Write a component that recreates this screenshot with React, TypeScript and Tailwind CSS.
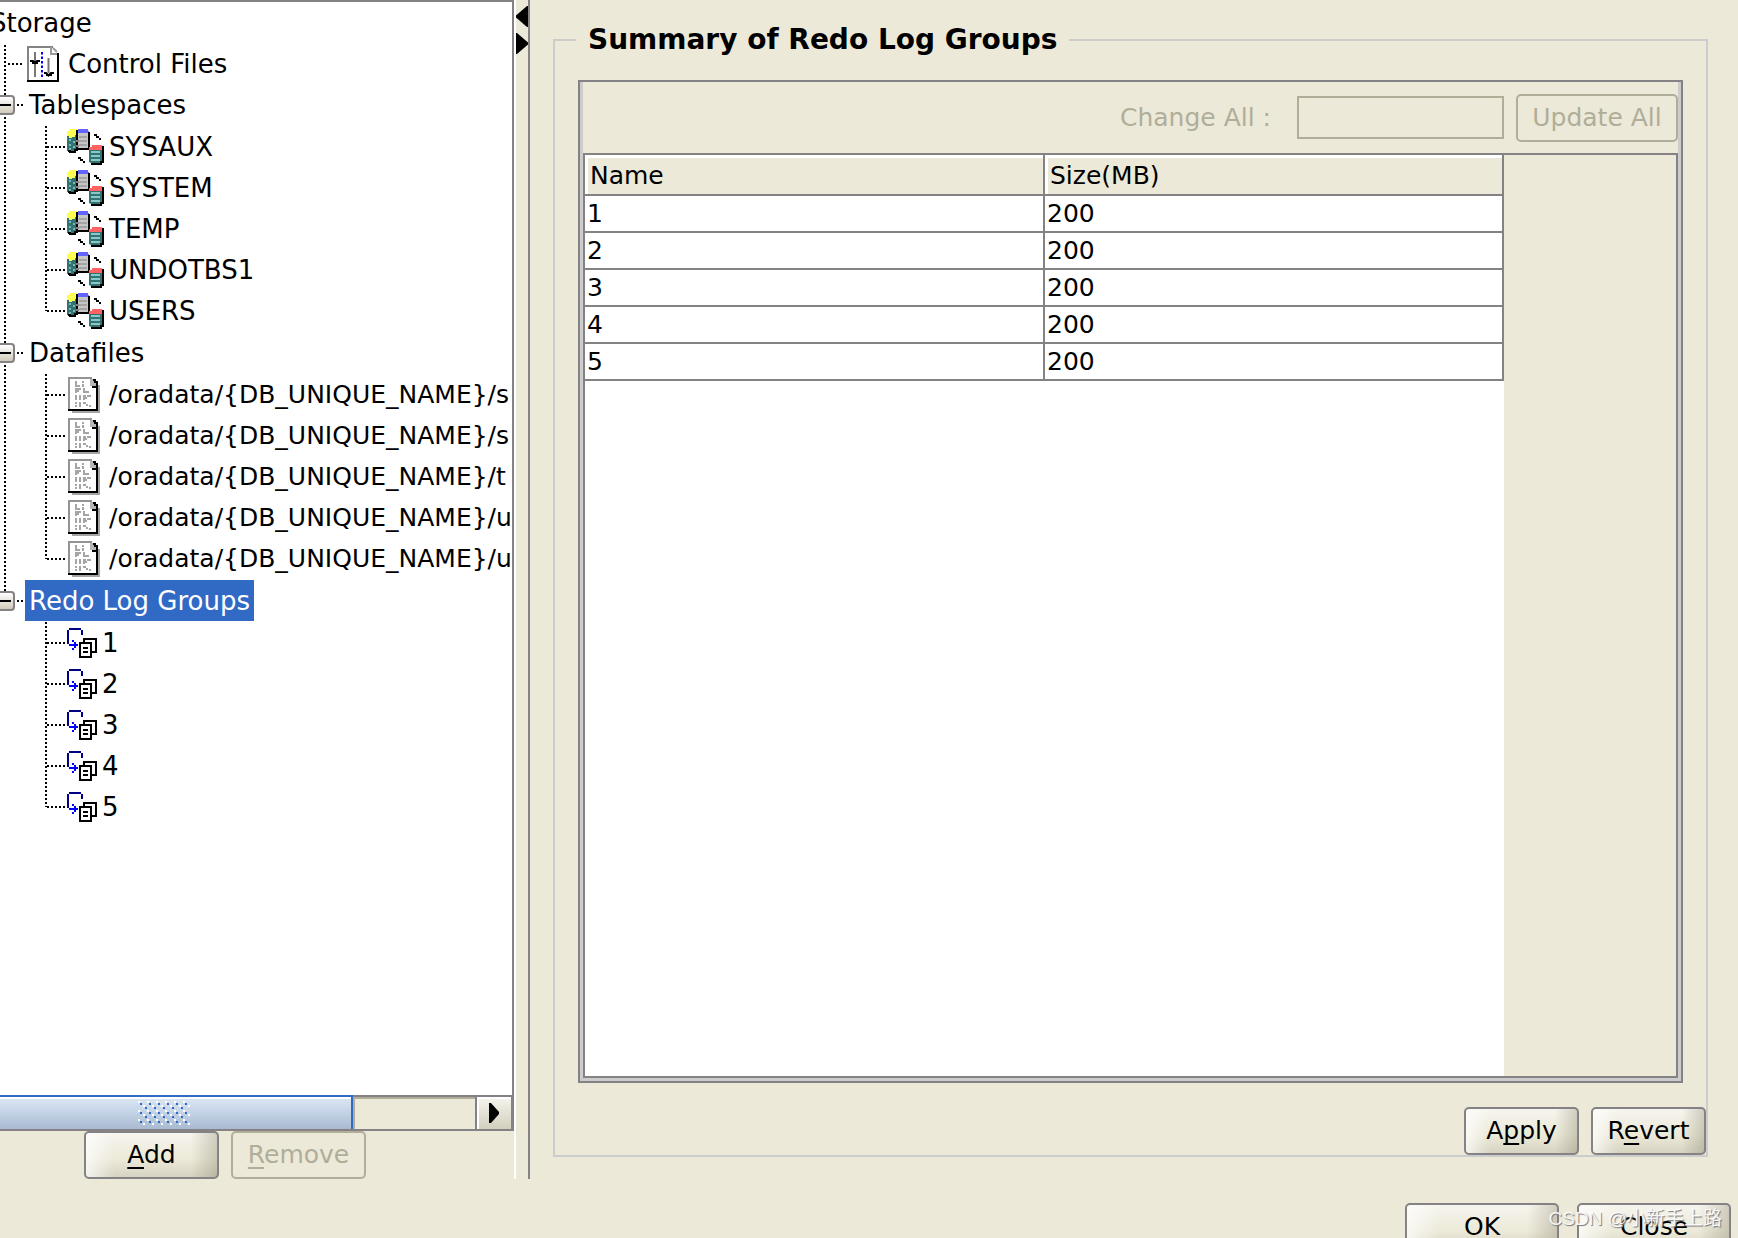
import React from 'react';
import clsx from 'clsx';

const tablespaces = ['SYSAUX', 'SYSTEM', 'TEMP', 'UNDOTBS1', 'USERS'];

const datafiles = [
  { id: 'sysaux', path: '/oradata/{DB_UNIQUE_NAME}/s' },
  { id: 'system', path: '/oradata/{DB_UNIQUE_NAME}/s' },
  { id: 'temp', path: '/oradata/{DB_UNIQUE_NAME}/t' },
  { id: 'undotbs', path: '/oradata/{DB_UNIQUE_NAME}/u' },
  { id: 'users', path: '/oradata/{DB_UNIQUE_NAME}/u' },
];

const redoLogGroups = [
  { name: '1', size: 200 },
  { name: '2', size: 200 },
  { name: '3', size: 200 },
  { name: '4', size: 200 },
  { name: '5', size: 200 },
];

const ControlFileIcon = () => (
  <svg width="32" height="36" viewBox="0 0 32 36" className="shrink-0" aria-hidden="true">
    <path d="M1 35V1h23l7 7v27z" fill="#fff" />
    <path d="M1 34V1h25" fill="none" stroke="#848284" strokeWidth="2" />
    <path d="M24 1v7h6M26 2l4 4" fill="none" stroke="#9a9a9a" strokeWidth="2" />
    <path d="M0 35h31V7" fill="none" stroke="#000" strokeWidth="2" />
    <path d="M8 6v25M21.500 12v15" stroke="#777" strokeWidth="2" />
    <path d="M3 15h3l2 2 2-2h3M5 17h6M17 27h2l2.500 2.500L24 27h3M19 29h6" fill="none" stroke="#000" strokeWidth="2" />
    <path d="M15 6v26" stroke="#00f" strokeWidth="2" strokeDasharray="2.500 2" />
  </svg>
);

const TablespaceIcon = () => (
  <svg width="37" height="36" viewBox="0 0 37 36" className="shrink-0" aria-hidden="true">
    <path d="M0 6h9v16l-3 2-4-2H0z" fill="#2f7373" />
    <path d="M2 11h2m2 2h2m-6 3h2m2 2h2m-6 2h2" stroke="#7fb5b5" strokeWidth="2" />
    <path d="M0 2h2V0h8v6H8v2H5v1H2V7H0z" fill="#ffff52" />
    <path d="M1 22h2v1h5v-2h2V1" fill="none" stroke="#000" strokeWidth="2" />
    <path d="M11 4h10v16H11z" fill="#c6c6c6" />
    <path d="M12 8h8M12 12h8M12 16h8" stroke="#848284" />
    <path d="M9 12h3M9 17h3" stroke="#848284" strokeWidth="2" />
    <path d="M11 0h10v2h1v2H11z" fill="#6363ff" />
    <path d="M22 3v17M11 20h12" fill="none" stroke="#000" strokeWidth="2" />
    <path d="M22 21h13v12l-3 1h-8l-2-1z" fill="#2f7373" />
    <path d="M24 23h9M24 27h9M24 31h9" stroke="#8cc6c6" strokeWidth="2" />
    <path d="M25 16h10v5H22v-3h3z" fill="#ff6363" />
    <path d="M36 17v16h-2v2H24" fill="none" stroke="#000" strokeWidth="2" />
    <path d="M27 5h3v2h-3zM29 7h3v2h-3zM32 9h2v2h-2zM11 28h3v2h-3zM13 30h3v2h-3zM16 32h2v2h-2z" fill="#000" />
  </svg>
);

const DatafileIcon = () => (
  <svg width="32" height="36" viewBox="0 0 32 36" className="mr-1 ml-px shrink-0" aria-hidden="true">
    <path d="M4 33h25V8h3v28H4z" fill="#a5a5a5" />
    <path d="M1 1h22l6 6v26H1z" fill="#fff" />
    <path d="M1 33V1h23" fill="none" stroke="#949494" strokeWidth="2" />
    <path d="M22 2h4v2h2v5h-6z" fill="#b5b5b5" />
    <path d="M25 3h2v2h2v5h-5" fill="none" stroke="#000" strokeWidth="2" />
    <path d="M0 33h29V8" fill="none" stroke="#000" strokeWidth="2" />
    <path
      d="M8 4v5h4M15 4v2M15 7v3M8 16v-4h5M8 14h3M16 11v4h5M8 18v5M12 18v5M16 23v-4h2M19 19h4M16 21h3M8 25v2M8 28v2M12 25v5M15 26h3M18 28h2M21 29h2"
      fill="none"
      stroke="#a5a5a5"
      strokeWidth="2"
    />
  </svg>
);

const RedoLogIcon = () => (
  <svg width="30" height="30" viewBox="0 0 30 30" className="shrink-0" aria-hidden="true">
    <path d="M1 16V2M2 1h12M15 2v5" fill="none" stroke="#000084" strokeWidth="2" />
    <path d="M2 17h9M6 12v2M8 14v6M6 20v2" fill="none" stroke="#00f" strokeWidth="2" />
    <path d="M17 11h12v13H17z" fill="#fff" stroke="#000" strokeWidth="2" />
    <path d="M13 15h11v14H13z" fill="#fff" stroke="#000" strokeWidth="2" />
    <path d="M16 20h5M16 24h5" stroke="#000" strokeWidth="2" />
  </svg>
);

const dotsX = 'h-[2px] bg-[repeating-linear-gradient(to_right,#000_0_2px,transparent_2px_4px)]';
const dotsY = 'w-[2px] bg-[repeating-linear-gradient(to_bottom,#000_0_2px,transparent_2px_4px)]';

interface TreeGroupProps {
  label: string;
  selected?: boolean;
  children: React.ReactNode;
}

const TreeGroup: React.FC<TreeGroupProps> = ({ label, selected = false, children }) => (
  <li className="mb-px">
    <div className="flex h-[41px] items-center">
      <button
        type="button"
        aria-label={`Collapse ${label}`}
        className="-ml-[9px] flex h-5 w-5 shrink-0 items-center justify-center rounded-sm border-2 border-[#848284] bg-linear-to-b from-white to-[#cfcbbb]"
      >
        <span className="h-[2px] w-3 bg-black" />
      </button>
      <span className={clsx(dotsX, 'ml-[2px] w-2 shrink-0')} />
      <span
        className={clsx(
          'flex h-full items-center px-1 whitespace-nowrap',
          selected && 'bg-[#316ac5] text-white'
        )}
      >
        {label}
      </span>
    </div>
    <div className="flex pt-px pl-[41px]">
      <span className={clsx(dotsY, 'mb-5 shrink-0')} />
      <ul>{children}</ul>
    </div>
  </li>
);

interface TreeLeafProps {
  icon: React.ReactNode;
  label: string;
  className?: string;
}

const TreeLeaf: React.FC<TreeLeafProps> = ({ icon, label, className }) => (
  <li className={clsx('flex h-[41px] items-center', className)}>
    <span className={clsx(dotsX, 'w-5 shrink-0')} />
    {icon}
    <span className="whitespace-nowrap pl-[5px]">{label}</span>
  </li>
);

interface PushButtonProps {
  className?: string;
  disabled?: boolean;
  children: React.ReactNode;
}

const PushButton: React.FC<PushButtonProps> = ({ className, disabled = false, children }) => (
  <button
    type="button"
    disabled={disabled}
    className={clsx(
      'flex h-12 shrink-0 items-center justify-center rounded-[5px] border-2',
      disabled
        ? 'border-[#b0ae98] text-[#b0ae98]'
        : 'border-[#848284] bg-[linear-gradient(to_right,rgba(255,255,255,0.7),transparent_22%,transparent_80%,rgba(120,115,90,0.3)),linear-gradient(to_bottom,#f6f5ee,#ece9d8_60%,#d6d3c2)]',
      className
    )}
  >
    <span>{children}</span>
  </button>
);

// underlined letter of a button caption
const Key: React.FC<{ children: React.ReactNode }> = ({ children }) => (
  <u className="decoration-2 underline-offset-4 [text-decoration-skip-ink:none]">{children}</u>
);

const StorageTree = () => (
  <div className="min-h-0 flex-1 overflow-hidden border-t-2 border-r-2 border-[#848284] bg-white text-[26px]">
    <div className="-ml-[10px] flex h-[41px] items-center">Storage</div>
    <div className="flex pl-1">
      <span className={clsx(dotsY, 'mt-[2px] mb-[227px] shrink-0')} />
      <ul className="-ml-[2px]">
        <li className="flex h-[41px] items-center">
          <span className={clsx(dotsX, 'mr-[3px] ml-1 w-4 shrink-0')} />
          <ControlFileIcon />
          <span className="whitespace-nowrap pl-[9px]">Control Files</span>
        </li>
        <TreeGroup label="Tablespaces">
          {tablespaces.map((name) => (
            <TreeLeaf key={name} icon={<TablespaceIcon />} label={name} />
          ))}
        </TreeGroup>
        <TreeGroup label="Datafiles">
          {datafiles.map((file) => (
            <TreeLeaf key={file.id} icon={<DatafileIcon />} label={file.path} className="text-[25px]" />
          ))}
        </TreeGroup>
        <TreeGroup label="Redo Log Groups" selected>
          {redoLogGroups.map((group) => (
            <TreeLeaf key={group.name} icon={<RedoLogIcon />} label={group.name} />
          ))}
        </TreeGroup>
      </ul>
    </div>
  </div>
);

const TreeScrollbar = () => (
  <div className="flex h-9 shrink-0 border-t-2 border-r-3 border-b-2 border-[#848284]">
    <div className="-mt-[2px] flex w-[353px] items-center justify-center border-t-2 border-r-2 border-[#316ac5] bg-linear-to-b from-[#dce7f3] via-[#c3d3e6] to-[#a9b9d0] pr-6 shadow-[inset_0_2px_0_#fff]">
      <svg width="52" height="24" aria-hidden="true">
        <defs>
          <pattern id="grip" width="9" height="9" patternUnits="userSpaceOnUse">
            <path d="M0 0h2v2H0zM5 4h2v2H5z" fill="#fff" />
            <path d="M2 2h2v2H2zM7 6h2v2H7z" fill="#316ac5" />
          </pattern>
        </defs>
        <rect width="52" height="24" fill="url(#grip)" />
      </svg>
    </div>
    <div className="flex-1 border-t-2 border-l-2 border-[#b0ae98]" />
    <button
      type="button"
      aria-label="Scroll right"
      className="flex w-9 items-center justify-center border-l-2 border-[#848284] bg-linear-to-b from-[#f6f5ee] to-[#d2cfbe] shadow-[inset_2px_2px_0_#fff]"
    >
      <svg width="10" height="20" viewBox="0 0 10 20" aria-hidden="true">
        <path d="M0 0h2l8 9v2l-8 9H0z" fill="#000" />
      </svg>
    </button>
  </div>
);

const SplitDivider = () => (
  <div className="flex w-4 shrink-0 flex-col items-start gap-[6px] border-r-2 border-l-2 border-l-white border-r-[#848284] pt-[6px]">
    <button type="button" aria-label="Collapse left">
      <svg width="12" height="21" viewBox="0 0 12 21" className="block" aria-hidden="true">
        <path d="M12 0v21h-1L0 11.500v-2L11 0z" fill="#000" />
      </svg>
    </button>
    <button type="button" aria-label="Expand right">
      <svg width="12" height="21" viewBox="0 0 12 21" className="block" aria-hidden="true">
        <path d="M0 0v21h1l11-9.500v-2L1 0z" fill="#000" />
      </svg>
    </button>
  </div>
);

const RedoLogTable = () => (
  <table className="w-full table-fixed border-collapse text-left">
    <thead>
      <tr className="h-10 bg-[#ece9d8]">
        {['Name', 'Size(MB)'].map((title) => (
          <th
            key={title}
            className="border-r-2 border-b-2 border-[#848284] p-0 pt-[3px] pl-[5px] font-normal shadow-[inset_3px_3px_0_#fff]"
          >
            {title}
          </th>
        ))}
      </tr>
    </thead>
    <tbody>
      {redoLogGroups.map((group) => (
        <tr key={group.name} className="h-[37px]">
          <td className="border-r-2 border-b-2 border-[#848284] p-0 pl-[2px] leading-8">{group.name}</td>
          <td className="border-r-2 border-b-2 border-[#848284] p-0 pl-[2px] leading-8">{group.size}</td>
        </tr>
      ))}
    </tbody>
  </table>
);

const SummaryPanel = () => (
  <fieldset className="flex min-w-0 flex-1 flex-col border-2 border-[#cccccc]">
    <legend className="ml-[21px] h-9 px-3 text-[28px] leading-9 font-bold">
      Summary of Redo Log Groups
    </legend>
    <div className="mx-[23px] mt-[22px] flex min-h-0 flex-1 flex-col border-2 border-[#848284]">
      <div className="flex min-h-0 flex-1 flex-col border-r-3 border-b-3 border-l-3 border-[#cccccc]">
        <div className="flex h-[71px] shrink-0 items-center justify-end text-[#b0ae98]">
          <label htmlFor="change-all" className="pr-[26px]">
            Change All :
          </label>
          <input
            id="change-all"
            type="text"
            disabled
            className="h-[43px] w-[207px] border-2 border-[#b0ae98]"
          />
          <PushButton disabled className="ml-3 w-[162px]">
            Update All
          </PushButton>
        </div>
        <div className="flex min-h-0 flex-1 border-2 border-[#848284]">
          <div className="min-w-0 flex-1 bg-white">
            <RedoLogTable />
          </div>
          <div className="w-[172px] shrink-0" />
        </div>
      </div>
    </div>
    <div className="mt-6 flex justify-end gap-3">
      <PushButton className="w-[115px]">
        A<Key>p</Key>ply
      </PushButton>
      <PushButton className="w-[115px]">
        R<Key>e</Key>vert
      </PushButton>
    </div>
  </fieldset>
);

const App = () => (
  <div className="relative flex h-screen flex-col overflow-hidden bg-[#ece9d8] font-['DejaVu_Sans','Noto_Sans_CJK_SC',sans-serif] text-[25px] leading-8 text-black">
    <div className="flex min-h-0 flex-1">
      <aside className="flex w-[514px] shrink-0 flex-col">
        <StorageTree />
        <TreeScrollbar />
        <div className="flex gap-3 pl-[84px]">
          <PushButton className="w-[135px]">
            <Key>A</Key>dd
          </PushButton>
          <PushButton disabled className="w-[135px]">
            <Key>R</Key>emove
          </PushButton>
        </div>
      </aside>
      <SplitDivider />
      <main className="flex min-w-0 flex-1 pt-[22px] pr-[30px] pb-[22px] pl-[23px]">
        <SummaryPanel />
      </main>
    </div>
    <footer className="flex h-[59px] shrink-0 items-start justify-end gap-[18px] pt-6 pr-[7px]">
      <PushButton className="w-[154px]">
        <Key>O</Key>K
      </PushButton>
      <PushButton className="w-[154px]">
        <Key>C</Key>lose
      </PushButton>
    </footer>
    <div className="pointer-events-none absolute right-4 bottom-[3px] font-['Liberation_Sans','Noto_Sans_CJK_SC',sans-serif] text-[19px] text-white/90 [text-shadow:1px_1px_1px_#777]">
      CSDN @小新手上路
    </div>
  </div>
);

export default App;
